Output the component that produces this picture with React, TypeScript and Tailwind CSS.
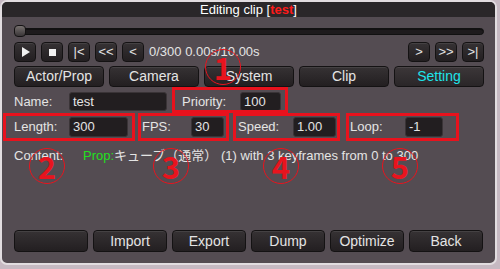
import React from "react";

const font = { fontFamily: '"Liberation Sans", "Noto Sans CJK JP", Arial, sans-serif' };

function Btn({ children, className = "" }: { children?: React.ReactNode; className?: string }) {
  return (
    <div
      className={
        "flex items-center justify-center rounded-[4px] border border-[#141213] bg-gradient-to-b from-[#363234] to-[#231f21] text-[13px] text-[#e4e4e4] shadow-[inset_0_1px_0_rgba(255,255,255,0.08)] " +
        className
      }
    >
      {children}
    </div>
  );
}

function Input({ value, className = "" }: { value: string; className?: string }) {
  return (
    <div
      className={
        "flex items-center rounded-[3px] border border-[#3a3437] bg-[#221e20] pl-[3px] text-[13px] text-[#e4e4e4] " +
        className
      }
    >
      {value}
    </div>
  );
}

function Circle({ n, x, y }: { n: string; x: number; y: number }) {
  return (
    <div
      className="absolute flex h-[36px] w-[36px] items-center justify-center rounded-full border-[1.5px] border-[#e8141e] text-[31px] font-bold leading-none text-[#e8141e]"
      style={{ left: x - 18, top: y - 18, fontFamily: '"Noto Sans CJK JP", sans-serif' }}
    >
      <span className="mt-[-2px]">{n}</span>
    </div>
  );
}

function RedBox({ x1, y1, x2, y2 }: { x1: number; y1: number; x2: number; y2: number }) {
  return (
    <div
      className="pointer-events-none absolute border-[3px] border-[#e8121d]"
      style={{ left: x1, top: y1, width: x2 - x1, height: y2 - y1 }}
    />
  );
}

export default function App() {
  return (
    <div className="relative h-[269px] w-[500px] overflow-hidden bg-[#c6b9c2]" style={font}>
      <div className="flex h-[265px] w-[497px] flex-col overflow-hidden rounded-[7px] border-2 border-[#e2dde0] bg-[#544c52]">
        {/* title */}
        <div className="flex h-[15px] items-center justify-center bg-[#2a2729] text-[13px] leading-none text-white">
          Editing clip [<span className="font-bold text-[#ff1a1a]">test</span>]
        </div>

        {/* slider */}
        <div className="relative ml-[12px] mt-[8px] flex h-[12px] w-[470px] items-center">
          <div className="h-[7px] w-full rounded-full border border-[#111] bg-[#1e1b1d] shadow-[inset_0_1px_0_rgba(0,0,0,0.4)]" />
          <div className="absolute left-0 top-0 h-[12px] w-[12px] rounded-[4px] border border-[#141213] bg-gradient-to-b from-[#77716f] to-[#3a3638]" />
        </div>

        {/* transport */}
        <div className="ml-[12px] mt-[5px] flex h-[20px] w-[470px] items-center">
          <div className="flex gap-[5px]">
            <Btn className="h-[20px] w-[22px]">
              <svg width="9" height="10" viewBox="0 0 9 10"><path d="M1 0 L9 5 L1 10 Z" fill="#f0f0f0" /></svg>
            </Btn>
            <Btn className="h-[20px] w-[22px]">
              <div className="h-[7px] w-[7px] bg-[#f0f0f0]" />
            </Btn>
            <Btn className="h-[20px] w-[22px] text-[12px]">|&lt;</Btn>
            <Btn className="h-[20px] w-[22px] text-[10px]">&lt;&lt;</Btn>
            <Btn className="h-[20px] w-[22px] text-[12px]">&lt;</Btn>
          </div>
          <div className="ml-[5px] text-[13px] text-[#e4e4e4]">0/300 0.00s/10.00s</div>
          <div className="ml-auto flex gap-[5px]">
            <Btn className="h-[20px] w-[22px] text-[12px]">&gt;</Btn>
            <Btn className="h-[20px] w-[22px] text-[10px]">&gt;&gt;</Btn>
            <Btn className="h-[20px] w-[22px] text-[12px]">&gt;|</Btn>
          </div>
        </div>

        {/* tabs */}
        <div className="ml-[12px] mt-[4px] flex h-[21px] w-[470px] gap-[5px]">
          <Btn className="h-[21px] w-[90px] text-[14px]">Actor/Prop</Btn>
          <Btn className="h-[21px] w-[90px] text-[14px]">Camera</Btn>
          <Btn className="h-[21px] w-[90px] text-[14px]">System</Btn>
          <Btn className="h-[21px] w-[90px] text-[14px]">Clip</Btn>
          <Btn className="h-[21px] w-[90px] !from-[#3c3739] !to-[#2a2628] text-[14px] !text-[#1ee4ea]">Setting</Btn>
        </div>

        {/* name row */}
        <div className="ml-[12px] mt-[5px] flex h-[19px] items-center text-[13px] text-[#e4e4e4]">
          <div className="w-[55px]">Name:</div>
          <Input value="test" className="h-[19px] w-[98px]" />
          <div className="ml-[15px] w-[58px]">Priority:</div>
          <Input value="100" className="h-[19px] w-[41px]" />
        </div>

        {/* row 2 */}
        <div className="ml-[12px] mt-[6px] flex h-[20px] items-center text-[13px] text-[#e4e4e4]">
          <div className="w-[55px]">Length:</div>
          <Input value="300" className="h-[20px] w-[59px]" />
          <div className="ml-[14px] w-[49px]">FPS:</div>
          <Input value="30" className="h-[20px] w-[33px]" />
          <div className="ml-[14px] w-[55px]">Speed:</div>
          <Input value="1.00" className="h-[20px] w-[43px]" />
          <div className="ml-[14px] w-[55px]">Loop:</div>
          <Input value="-1" className="h-[20px] w-[38px]" />
        </div>

        {/* content */}
        <div className="ml-[12px] mt-[11px] flex h-[16px] items-center text-[13px] text-[#e4e4e4]">
          <div className="w-[69px]">Content:</div>
          <span className="text-[#22e01e]">Prop:</span>
          <span>キューブ（通常） (1) with 3 keyframes from 0 to 300</span>
        </div>

        <div className="flex-1" />

        {/* bottom buttons */}
        <div className="mb-[11px] ml-[12px] flex h-[22px] w-[470px] gap-[5px]">
          <Btn className="h-[22px] w-[74px] text-[14px]"></Btn>
          <Btn className="h-[22px] w-[74px] text-[14px]">Import</Btn>
          <Btn className="h-[22px] w-[74px] text-[14px]">Export</Btn>
          <Btn className="h-[22px] w-[74px] text-[14px]">Dump</Btn>
          <Btn className="h-[22px] w-[74px] text-[14px]">Optimize</Btn>
          <Btn className="h-[22px] w-[74px] text-[14px]">Back</Btn>
        </div>
      </div>

      {/* annotations */}
      <RedBox x1={172} y1={87} x2={288} y2={113} />
      <RedBox x1={3} y1={113} x2={135} y2={141} />
      <RedBox x1={138} y1={113} x2={229} y2={141} />
      <RedBox x1={233} y1={113} x2={340} y2={141} />
      <RedBox x1={346} y1={113} x2={459} y2={141} />
      <Circle n="1" x={223} y={67} />
      <Circle n="2" x={47} y={166} />
      <Circle n="3" x={171} y={166} />
      <Circle n="4" x={281} y={166} />
      <Circle n="5" x={400} y={166} />
    </div>
  );
}
